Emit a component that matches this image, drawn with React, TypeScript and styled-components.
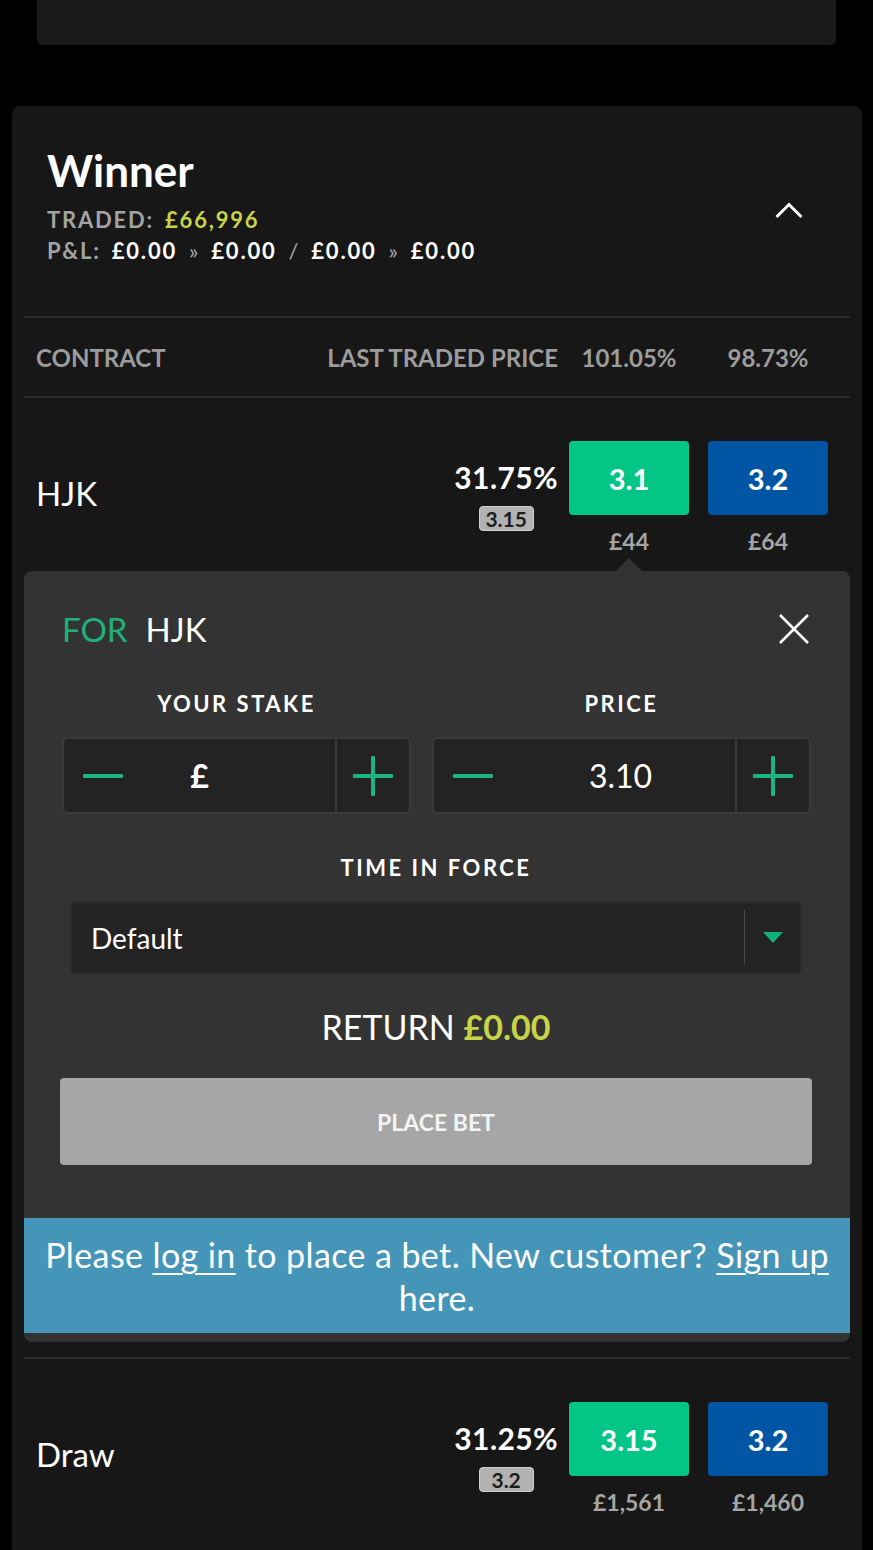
import React from 'react';
import styled, { createGlobalStyle } from 'styled-components';

const GlobalStyle = createGlobalStyle`
  body {
    margin: 0;
    background: #000;
    font-family: Lato, "Noto Sans", sans-serif;
    color: #fff;
  }
`;

const TopCard = styled.div`
  margin: 0 37px;
  height: 45px;
  background: #1a1a1a;
  border-radius: 0 0 6px 6px;
`;

const MarketCard = styled.section`
  margin: 61px 11px 0 12px;
  padding: 0 12px 40px;
  background: #171717;
  border-radius: 8px 8px 0 0;
`;

const Header = styled.div`
  display: flex;
  align-items: center;
  justify-content: space-between;
  padding: 42px 47px 50px 23px;

  svg {
    margin-top: 7px;
  }
`;

const Title = styled.h2`
  margin: 0 0 12px;
  font-size: 44px;
  line-height: 44px;
  font-weight: 700;
`;

const StatLine = styled.div`
  font-size: 22px;
  line-height: 31px;
  font-weight: 700;
  letter-spacing: 1.8px;
  color: #a3a3a3;
`;

const StatValue = styled.span<{ $color?: string }>`
  color: ${({ $color }) => $color || '#fff'};
  margin: 0 12px 0 11px;
`;

const Sep = styled.span`
  color: #a3a3a3;
  font-weight: 400;
`;

const Divider = styled.div`
  height: 2px;
  background: #2b2b2b;
`;

const ColumnHead = styled.div`
  display: flex;
  align-items: center;
  height: 78px;
  padding: 0 22px 0 12px;
  font-size: 24px;
  font-weight: 700;
  color: #9c9c9c;
`;

const HeadLabel = styled.div`
  flex: 1;
`;

const HeadLtp = styled.div`
  margin-right: 11px;
`;

const HeadCol = styled.div`
  width: 120px;
  text-align: center;
  & + & {
    margin-left: 19px;
  }
`;

const ContractRow = styled.div`
  display: flex;
  padding: 43px 22px 17px 12px;
`;

const ContractName = styled.div`
  flex: 1;
  align-self: center;
  padding-bottom: 10px;
  font-size: 33px;
`;

const PctCol = styled.div`
  display: flex;
  flex-direction: column;
  align-items: center;
  margin: 20px 11px 0 0;
`;

const Pct = styled.div`
  font-size: 30px;
  line-height: 32px;
  font-weight: 700;
  letter-spacing: 0.4px;
`;

const Badge = styled.div`
  margin-top: 13px;
  width: 55px;
  height: 25px;
  box-sizing: border-box;
  border: 1px solid #cfcfcf;
  border-radius: 4px;
  background: #b2b2b2;
  color: #1e1e1e;
  font-size: 21px;
  line-height: 23px;
  font-weight: 700;
  text-align: center;
`;

const PriceCell = styled.div`
  width: 120px;
  & + & {
    margin-left: 19px;
  }
`;

const PriceButton = styled.div<{ $bg: string }>`
  display: flex;
  align-items: center;
  justify-content: center;
  height: 74px;
  border-radius: 4px;
  background: ${({ $bg }) => $bg};
  font-size: 29px;
  font-weight: 700;
`;

const Amount = styled.div`
  margin-top: 13px;
  font-size: 23px;
  line-height: 26px;
  font-weight: 700;
  color: #a5a5a5;
  text-align: center;
`;

const BetPanel = styled.div`
  position: relative;
  padding-bottom: 9px;
  background: #333;
  border-radius: 8px;
  margin-bottom: 15px;

  &::before {
    content: '';
    position: absolute;
    top: -13px;
    left: 592px;
    border-left: 13px solid transparent;
    border-right: 13px solid transparent;
    border-bottom: 13px solid #333;
  }
`;

const PanelBody = styled.div`
  padding: 38px 40px 0 38px;
`;

const ForRow = styled.div`
  display: flex;
  align-items: center;
  justify-content: space-between;
  height: 40px;
  font-size: 33px;
`;

const ForLabel = styled.span`
  color: #1fb07b;
  margin-right: 18px;
`;

const StakeGrid = styled.div`
  display: grid;
  grid-template-columns: 349px 379px;
  column-gap: 21px;
  margin-top: 42px;
`;

const FieldLabel = styled.div`
  font-size: 22px;
  line-height: 26px;
  font-weight: 700;
  letter-spacing: 2.5px;
  text-align: center;
`;

const Field = styled.div`
  display: grid;
  grid-template-columns: 1fr 74px;
  height: 77px;
  margin-top: 20px;
  box-sizing: border-box;
  border: 2px solid #3a3a3a;
  border-radius: 6px;
  background: #232323;
`;

const MinusCell = styled.div`
  grid-area: 1 / 1;
  justify-self: start;
  align-self: center;
  display: flex;
  margin-left: 19px;
`;

const FieldValue = styled.div<{ $shift: number; $bold?: boolean }>`
  grid-area: 1 / 1;
  justify-self: center;
  align-self: center;
  padding-left: ${({ $shift }) => $shift}px;
  font-size: 32px;
  font-weight: ${({ $bold }) => ($bold ? 700 : 400)};
`;

const PlusCell = styled.div`
  display: flex;
  align-items: center;
  justify-content: center;
  border-left: 2px solid #3a3a3a;
`;

const SectionLabel = styled(FieldLabel)`
  margin-top: 41px;
`;

const Select = styled.div`
  display: flex;
  align-items: center;
  height: 73px;
  margin: 20px 8px 0 8px;
  box-sizing: border-box;
  border: 2px solid #2c2c2c;
  border-radius: 6px;
  background: #232323;
`;

const SelectText = styled.div`
  flex: 1;
  padding-left: 19px;
  font-size: 28px;
`;

const SelectArrow = styled.div`
  align-self: stretch;
  display: flex;
  align-items: center;
  justify-content: center;
  width: 55px;
  margin: 7px 0;
  border-left: 1px solid #474747;
`;

const Return = styled.div`
  margin-top: 34px;
  font-size: 34px;
  line-height: 38px;
  text-align: center;
`;

const ReturnValue = styled.span`
  color: #c8d447;
  font-weight: 700;
`;

const PlaceBet = styled.button`
  display: block;
  width: 752px;
  height: 87px;
  margin: 32px 0 0 -2px;
  border: none;
  border-radius: 4px;
  background: #a6a6a6;
  color: #f4f4f4;
  font-family: Lato, "Noto Sans", sans-serif;
  font-size: 23px;
  font-weight: 700;
`;

const Banner = styled.div`
  margin-top: 53px;
  padding: 15px 12px 14px;
  background: #4595b8;
  font-size: 34px;
  line-height: 43px;
  letter-spacing: 0.4px;
  text-align: center;

  a {
    color: #fff;
    text-decoration: underline;
    text-underline-offset: 5px;
    text-decoration-thickness: 2px;
  }
`;

const Chevron = () => (
  <svg width="28" height="17" viewBox="0 0 28 17">
    <polyline points="1.5,15 14,2.5 26.5,15" fill="none" stroke="#fff" strokeWidth="3" />
  </svg>
);

const CloseIcon = () => (
  <svg width="32" height="32" viewBox="0 0 32 32">
    <path d="M2 2 L30 30 M30 2 L2 30" stroke="#fff" strokeWidth="2.5" />
  </svg>
);

const Minus = () => (
  <svg width="40" height="4" viewBox="0 0 40 4">
    <rect width="40" height="4" rx="1" fill="#1db57f" />
  </svg>
);

const Plus = () => (
  <svg width="40" height="40" viewBox="0 0 40 40">
    <rect x="18" width="4" height="40" rx="1" fill="#1db57f" />
    <rect y="18" width="40" height="4" rx="1" fill="#1db57f" />
  </svg>
);

type Contract = {
  name: string;
  pct: string;
  ltp: string;
  back: string;
  lay: string;
  backAmt: string;
  layAmt: string;
};

const Row = ({ name, pct, ltp, back, lay, backAmt, layAmt }: Contract) => (
  <ContractRow>
    <ContractName>{name}</ContractName>
    <PctCol>
      <Pct>{pct}</Pct>
      <Badge>{ltp}</Badge>
    </PctCol>
    <PriceCell>
      <PriceButton $bg="#03c585">{back}</PriceButton>
      <Amount>{backAmt}</Amount>
    </PriceCell>
    <PriceCell>
      <PriceButton $bg="#0056a4">{lay}</PriceButton>
      <Amount>{layAmt}</Amount>
    </PriceCell>
  </ContractRow>
);

export default function App() {
  return (
    <>
      <GlobalStyle />
      <TopCard />
      <MarketCard>
        <Header>
          <div>
            <Title>Winner</Title>
            <StatLine>
              TRADED:<StatValue $color="#c8d447">£66,996</StatValue>
            </StatLine>
            <StatLine>
              P&amp;L:<StatValue>£0.00</StatValue>
              <Sep>»</Sep>
              <StatValue>£0.00</StatValue>
              <Sep>/</Sep>
              <StatValue>£0.00</StatValue>
              <Sep>»</Sep>
              <StatValue>£0.00</StatValue>
            </StatLine>
          </div>
          <Chevron />
        </Header>
        <Divider />
        <ColumnHead>
          <HeadLabel>CONTRACT</HeadLabel>
          <HeadLtp>LAST TRADED PRICE</HeadLtp>
          <HeadCol>101.05%</HeadCol>
          <HeadCol>98.73%</HeadCol>
        </ColumnHead>
        <Divider />
        <Row name="HJK" pct="31.75%" ltp="3.15" back="3.1" lay="3.2" backAmt="£44" layAmt="£64" />
        <BetPanel>
          <PanelBody>
            <ForRow>
              <div>
                <ForLabel>FOR</ForLabel>HJK
              </div>
              <CloseIcon />
            </ForRow>
            <StakeGrid>
              <div>
                <FieldLabel>YOUR STAKE</FieldLabel>
                <Field>
                  <MinusCell>
                    <Minus />
                  </MinusCell>
                  <FieldValue $shift={0} $bold>
                    £
                  </FieldValue>
                  <PlusCell>
                    <Plus />
                  </PlusCell>
                </Field>
              </div>
              <div>
                <FieldLabel>PRICE</FieldLabel>
                <Field>
                  <MinusCell>
                    <Minus />
                  </MinusCell>
                  <FieldValue $shift={72}>3.10</FieldValue>
                  <PlusCell>
                    <Plus />
                  </PlusCell>
                </Field>
              </div>
            </StakeGrid>
            <SectionLabel>TIME IN FORCE</SectionLabel>
            <Select>
              <SelectText>Default</SelectText>
              <SelectArrow>
                <svg width="20" height="11" viewBox="0 0 20 11">
                  <polygon points="0,0 20,0 10,11" fill="#10b07c" />
                </svg>
              </SelectArrow>
            </Select>
            <Return>
              RETURN <ReturnValue>£0.00</ReturnValue>
            </Return>
            <PlaceBet>PLACE BET</PlaceBet>
          </PanelBody>
          <Banner>
            Please <a>log in</a> to place a bet. New customer? <a>Sign up</a> here.
          </Banner>
        </BetPanel>
        <Divider />
        <Row name="Draw" pct="31.25%" ltp="3.2" back="3.15" lay="3.2" backAmt="£1,561" layAmt="£1,460" />
      </MarketCard>
    </>
  );
}
